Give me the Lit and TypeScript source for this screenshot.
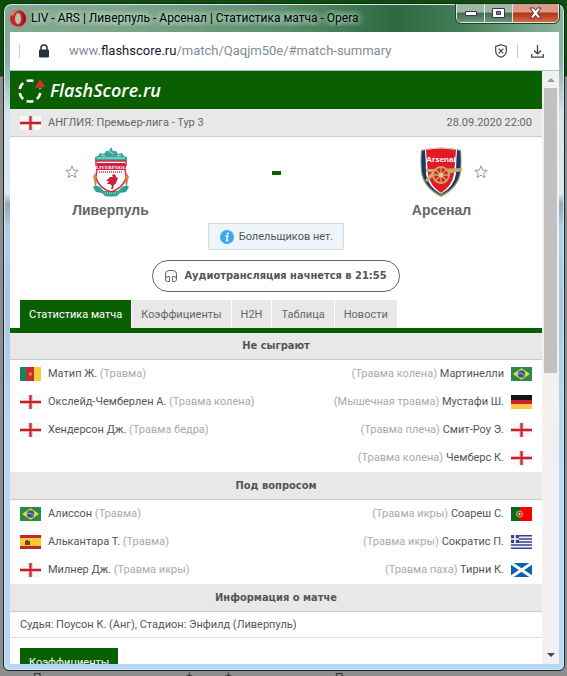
import { LitElement, html, css, svg, TemplateResult } from "lit";
import { customElement, property } from "lit/decorators.js";

type Player = { name: string; reason: string; flag: string };

const star = (cx: number, cy: number, r: number) => {
  const points: string[] = [];
  for (let i = 0; i < 10; i++) {
    const a = -Math.PI / 2 + (i * Math.PI) / 5;
    const d = i % 2 ? r * 0.42 : r;
    points.push(`${(cx + d * Math.cos(a)).toFixed(2)},${(cy + d * Math.sin(a)).toFixed(2)}`);
  }
  return points.join(" ");
};

const FLAGS: Record<string, TemplateResult> = {
  england: svg`<path fill="#f8f8f8" d="M0 0h21v14H0z"/><path stroke="#f0b4b8" stroke-width="4" d="M10.5 0v14M0 7h21"/><path stroke="#c4202e" stroke-width="2" d="M10.5 0v14M0 7h21"/>`,
  cameroon: svg`<path fill="#1c8062" d="M0 0h6v14H0z"/><path fill="#c52b32" d="M6 0h8v14H6z"/><path fill="#f6cf35" d="M14 0h7v14h-7z"/><polygon fill="#f0a030" points=${star(10.5, 7, 2.4)} />`,
  brazil: svg`<path fill="#2a8a4a" d="M0 0h21v14H0z"/><path fill="#e5d844" d="M10.5 1.3 19 7l-8.500 5.700L2 7z"/><circle cx="10.500" cy="7" r="3.700" fill="#3b5796"/><path d="M7.200 6.200q3.600-.6 6.400 2.200" fill="none" stroke="#b9c9d8" stroke-width=".8"/>`,
  germany: svg`<path fill="#171214" d="M0 0h21v5H0z"/><path fill="#c9222b" d="M0 5h21v4H0z"/><path fill="#f7cb45" d="M0 9h21v5H0z"/>`,
  spain: svg`<path fill="#c1272d" d="M0 0h21v14H0z"/><path fill="#fbc832" d="M0 3h21v8H0z"/><path fill="#5e4422" d="M5 6h1V5h2v1h2v4H5z"/><path fill="#933" d="M6 7h2v2H6z"/>`,
  portugal: svg`<path fill="#0b6a1d" d="M0 0h9v14H0z"/><path fill="#f00" d="M9 0h12v14H9z"/><circle cx="8.500" cy="7" r="3" fill="#b33a22" stroke="#d8b43c"/><circle cx="8.500" cy="7" r="1" fill="#eee"/>`,
  greece: svg`<path fill="#f2f3f8" d="M0 0h21v14H0z"/><path stroke="#3d4286" stroke-width="1.600" d="M0 .8h21M0 4h21M0 7h21M0 10h21M0 13.200h21"/><path fill="#3d4286" d="M0 0h8v8H0z"/><path stroke="#fff" stroke-width="1.500" d="M4 0v8M0 4h8"/>`,
  scotland: svg`<path fill="#0b62b4" d="M0 0h21v14H0z"/><path stroke="#fff" stroke-width="3" d="m0 0 21 14M21 0 0 14"/>`,
};

@customElement("country-flag")
class CountryFlag extends LitElement {
  static styles = css`
    :host { display: block; width: 21px; height: 14px; flex: none; }
    svg { display: block; }
  `;
  @property() code = "england";
  render() {
    return html`<svg width="21" height="14" viewBox="0 0 21 14" aria-hidden="true">${FLAGS[this.code]}</svg>`;
  }
}

@customElement("absence-list")
class AbsenceList extends LitElement {
  static styles = css`
    :host { display: block; }
    .columns { display: flex; justify-content: space-between; }
    ul { list-style: none; margin: 0; padding: 0 10px; }
    li { display: flex; align-items: center; gap: 7px; height: 28px; white-space: nowrap; }
    .away li { flex-direction: row-reverse; }
    .reason { color: #aaa; }
  `;
  @property({ attribute: false }) home: Player[] = [];
  @property({ attribute: false }) away: Player[] = [];
  render() {
    return html`<div class="columns">
      <ul class="home">
        ${this.home.map((p) => html`<li><country-flag code=${p.flag}></country-flag><span>${p.name} <span class="reason">(${p.reason})</span></span></li>`)}
      </ul>
      <ul class="away">
        ${this.away.map((p) => html`<li><country-flag code=${p.flag}></country-flag><span><span class="reason">(${p.reason})</span> ${p.name}</span></li>`)}
      </ul>
    </div>`;
  }
}

const OUT_HOME: Player[] = [
  { name: "Матип Ж.", reason: "Травма", flag: "cameroon" },
  { name: "Окслейд-Чемберлен А.", reason: "Травма колена", flag: "england" },
  { name: "Хендерсон Дж.", reason: "Травма бедра", flag: "england" },
];
const OUT_AWAY: Player[] = [
  { name: "Мартинелли", reason: "Травма колена", flag: "brazil" },
  { name: "Мустафи Ш.", reason: "Мышечная травма", flag: "germany" },
  { name: "Смит-Роу Э.", reason: "Травма плеча", flag: "england" },
  { name: "Чемберс К.", reason: "Травма колена", flag: "england" },
];
const DOUBT_HOME: Player[] = [
  { name: "Алиссон", reason: "Травма", flag: "brazil" },
  { name: "Алькантара Т.", reason: "Травма", flag: "spain" },
  { name: "Милнер Дж.", reason: "Травма икры", flag: "england" },
];
const DOUBT_AWAY: Player[] = [
  { name: "Соареш С.", reason: "Травма икры", flag: "portugal" },
  { name: "Сократис П.", reason: "Травма икры", flag: "greece" },
  { name: "Тирни К.", reason: "Травма паха", flag: "scotland" },
];
const TABS = ["Статистика матча", "Коэффициенты", "H2H", "Таблица", "Новости"];

const favourite = html`<svg width="14" height="14" viewBox="0 0 14 14" aria-hidden="true"><polygon points=${star(7, 7.4, 6.6)} fill="#fff" stroke="#999"/></svg>`;

const liverpoolCrest = html`<svg width="38" height="50" viewBox="0 0 38 50" aria-hidden="true">
  <path d="M3 14V10l3-1 2-3 4 1 2-3 3 0 2-4 2 4 3 0 2 3 4-1 2 3 3 1v4z" fill="#35a79b"/>
  <path d="M5 11h28M9 8l4 1M25 9l4-1M17 4l4 3" stroke="#bfe6df" stroke-width="1" fill="none"/>
  <path d="M1 40q4-3 8 1l3 3h14l3-3q4-4 8-1l-3 5-6 1-3 3q-6 1-12 0l-3-3-6-1z" fill="#2fa294"/>
  <path d="M4 14h30v4l-1 2 1 11q-3 10-15 14Q7 41 4 31l1-11-1-2z" fill="#fff" stroke="#d02846" stroke-width="1.500"/>
  <path d="M5 16h28v7H5z" fill="#cf2242"/>
  <text x="19" y="22" text-anchor="middle" font-family="Liberation Serif, serif" font-size="5" font-weight="bold" fill="#fff">LIVERPOOL</text>
  <path d="M7 25h24" stroke="#d02846" stroke-dasharray="1 1" stroke-width="1.500"/>
  <path d="m23 27-3 1 1 2-3 0-4 4 3 0-2 3 3 0 2 2-1 3 2 0 1-4 2-2 2-5-2-1z" fill="#cb1f40"/>
  <path d="m3 26-2 4 1 3h2l1-3zM35 26l-2 4 1 3h2l1-3z" fill="#e9843f"/>
  <path d="M2 33h3l-1 6H3zM33 33h3l-1 6h-1z" fill="#b98a4b"/>
  <path d="M13 46h12" stroke="#c9eae5" stroke-dasharray="1 1"/>
</svg>`;

const arsenalCrest = html`<svg width="44" height="50" viewBox="0 0 44 50" aria-hidden="true">
  <path d="M2 3Q22-2 42 3q1 10 0 22-2 16-20 25Q4 41 2 25 1 13 2 3z" fill="#a99561"/>
  <path d="M3 4Q22-1 41 4q1 10 0 20-2 16-19 24Q5 40 3 24 2 12 3 4z" fill="#173a6b"/>
  <path d="M6 3Q22-1 38 3q-1 12-1 24-2 13-15 20Q9 40 7 27 7 15 6 3z" fill="#fff"/>
  <path d="M7 3Q22 0 37 3q-1 13-2 24-2 12-13 19Q11 39 9 27 8 16 7 3z" fill="#e21a22"/>
  <text x="22" y="15" text-anchor="middle" font-family="Liberation Sans, sans-serif" font-size="8" font-weight="bold" fill="#fff">Arsenal</text>
  <path d="M7 22h12l24-1v3l-16 3-13 2-6 6-2-2 7-8H7z" fill="#c5ab6c"/>
  <circle cx="22" cy="28" r="8" fill="#e21a22" stroke="#c5ab6c" stroke-width="2"/>
  <path d="M22 20v16M14 28h16M16.500 22.500l11 11M27.500 22.500l-11 11" stroke="#c5ab6c" stroke-width="1.300"/>
  <circle cx="22" cy="28" r="2.500" fill="#d9c690"/>
</svg>`;

@customElement("app-root")
class AppRoot extends LitElement {
  static styles = css`
    * { box-sizing: border-box; }
    :host {
      box-sizing: border-box;
      display: flex; flex-direction: column; height: 100vh; padding: 3px 2px 0 3px; overflow: hidden;
      background: linear-gradient(#0d4d0c 0 76px, #8d8d8d 77px);
      font: 11px/14px Roboto, sans-serif; color: #555;
    }
    svg { display: block; flex: none; }
    button { font: inherit; color: inherit; border: 0; background: none; padding: 0; margin: 0; }
    .window {
      flex: 1; min-height: 0; display: flex; flex-direction: column;
      border: 1px solid #1b2426; border-radius: 8px 8px 6px 6px; padding: 0 5px 6px 6px; overflow: hidden;
      box-shadow: inset 0 0 0 1px #d5e8e6;
      background: linear-gradient(#0000 0 28px, #8fb2a9 60px, #d5e3ef 110px, #dce9f5 190px, #91a9b4 200px, #b0ceec 225px, #a9c5e3 300px, #b8d6f4 420px, #b8d7f8),
        linear-gradient(90deg, #84aa92, #79a386 25%, #5b8e6c 50%, #2c693e 70%, #457f58 82%, #8eb59c);
    }
    .titlebar { flex: none; height: 28px; display: flex; align-items: center; gap: 5px; color: #000; font: 12px/16px Roboto, sans-serif; }
    .title { flex: 1; min-width: 0; white-space: nowrap; overflow: hidden; text-shadow: 0 0 6px #dfe, 0 0 8px #dfe; }
    .controls { display: flex; align-self: flex-start; height: 19px; border: 1px solid #dbe8df; border-top: 0; border-radius: 0 0 5px 5px; overflow: hidden; outline: 1px solid #26402e; outline-offset: 0; }
    .controls button { width: 28px; display: grid; place-items: center; background: linear-gradient(#9db9a5 45%, #436b50 50%, #6c947a); border-right: 1px solid #dbe8df; }
    .controls .close { width: 45px; border: 0; background: linear-gradient(#d99a88 45%, #b2321a 50%, #d36a43); }
    .address { flex: none; height: 39px; display: flex; align-items: center; background: #fff; border-bottom: 1px solid #b9c2c8; padding: 0 15px 0 9px; }
    .rule { width: 1px; height: 14px; background: #ccc; }
    .lock { margin: 0 20px 0 19px; }
    .url { flex: 1; min-width: 0; white-space: nowrap; overflow: hidden; color: #808d99; text-decoration: none; font: 13px/20px Roboto, sans-serif; }
    .url b { font-weight: 400; color: #14202c; }
    .tools { display: flex; align-items: center; gap: 10px; }
    .download { margin-left: 3px; }
    .viewport { flex: 1; min-height: 0; display: flex; background: #fff; overflow: hidden; }
    .page { flex: 1; min-width: 0; overflow: hidden; }
    .scroll { flex: none; width: 17px; background: #f1f1f1; display: flex; flex-direction: column; align-items: center; padding: 7px 0; }
    .thumb { width: 13px; height: 285px; margin-top: 6px; background: #c1c1c1; }
    .down { margin-top: auto; }
    .brand { height: 38px; background: #0a5f00; display: flex; align-items: center; gap: 5px; padding-left: 7px; color: #fff; }
    .brand a { color: #fff; text-decoration: none; font: italic 600 18px/24px "Open Sans", sans-serif; }
    .league { height: 28px; background: #e8e8e8; border-bottom: 1px solid #ccc; display: flex; align-items: center; gap: 7px; padding: 0 10px; color: #666; }
    .league .date { margin-left: auto; }
    .match { display: grid; grid-template-columns: 201px 1fr 201px; padding: 9px 0 0; height: 86px; }
    .team { display: flex; flex-direction: column; align-items: center; gap: 3px; }
    .crest { display: flex; align-items: center; height: 52px; }
    .home-team .crest { padding-right: 26px; gap: 13px; }
    .away-team .crest { padding-left: 24px; gap: 11px; }
    .team h2 { margin: 0; font: bold 14px/18px "Liberation Sans", sans-serif; color: #666; }
    .score { justify-self: center; margin-top: 25px; width: 9px; height: 4px; background: #0a5f00; }
    .center { display: flex; flex-direction: column; align-items: center; gap: 10px; }
    .notice { height: 27px; display: flex; align-items: center; gap: 5px; padding: 0 10px 0 11px; border: 1px solid #cfdce2; background: #eef5fa; }
    .audio { height: 32px; display: flex; align-items: center; gap: 7px; padding: 0 12px; border: 1px solid #666; border-radius: 16px; font: bold 11px/14px "DejaVu Sans Condensed", sans-serif; }
    .tabs { display: flex; gap: 1px; padding: 0 10px; margin-top: 8px; border-bottom: 5px solid #0a5f00; }
    .tabs button { height: 28px; padding: 2px 9px 0; background: #e8e8e8; color: #666; white-space: nowrap; }
    .tabs .active { background: #0a5f00; color: #fff; }
    h3 { margin: 0; height: 27px; padding-top: 6px; background: #e8e8e8; border-bottom: 1px solid #ccc; text-align: center; font: bold 11px/14px "DejaVu Sans Condensed", sans-serif; color: #555; }
    absence-list + h3 { height: 28px; padding-top: 7px; }
    .info { margin: 0; height: 26px; padding: 6px 10px; border-bottom: 1px solid #ddd; white-space: nowrap; }
    .odds { display: block; height: 28px; margin: 10px 10px 0; padding: 2px 9px 0; background: #0a5f00; color: #fff; }
    .behind { flex: none; height: 5px; padding-left: 30px; display: grid; grid-template-columns: 152px 39px 111px auto; overflow: hidden; color: #333; font: 12px/14px Roboto, sans-serif; }
  `;

  render() {
    return html`<div class="window">
      <header class="titlebar">
        <svg width="16" height="17" viewBox="0 0 16 17" aria-hidden="true"><ellipse cx="8" cy="8.500" rx="8" ry="8.300" fill="#d0212b"/><path d="M8 .2a8 8.300 0 0 1 0 16.600q5-1 5-8.300T8 .2z" fill="#a80d18"/><path d="M1 5Q4 0 9 1 5 1 3 6z" fill="#f08080"/><ellipse cx="8" cy="8.500" rx="3" ry="5.500" fill="#a9c7b3"/></svg>
        <span class="title">LIV - ARS | Ливерпуль - Арсенал | Статистика матча - Opera</span>
        <div class="controls">
          <button aria-label="Свернуть"><svg width="12" height="5" viewBox="0 0 12 5"><path d="M.5.5h11v4H.5z" fill="#fff" stroke="#435"/></svg></button>
          <button aria-label="Развернуть"><svg width="13" height="10" viewBox="0 0 13 10"><path d="M.5.5h12v9H.5z" fill="#fff" stroke="#435"/><path d="M4.500 3.500h4v3h-4z" fill="#688" stroke="#435"/></svg></button>
          <button class="close" aria-label="Закрыть"><svg width="13" height="12" viewBox="0 0 13 12"><path d="M1 1h3.500l2 2.500L8.500 1H12L8.500 6l3.500 5H8.500l-2-2.500-2 2.500H1l3.500-5z" fill="#fff" stroke="#534"/></svg></button>
        </div>
      </header>
      <div class="address">
        <span class="rule"></span>
        <svg class="lock" width="10" height="14" viewBox="0 0 10 14" aria-hidden="true"><path d="M2 6V4a3 3 0 0 1 6 0v2" fill="none" stroke="#27313b" stroke-width="1.500"/><rect y="5.500" width="10" height="8" rx="1" fill="#27313b"/></svg>
        <a class="url" href="#match-summary">www.<b>flashscore.ru</b>/match/Qaqjm50e/#match-summary</a>
        <div class="tools">
          <button aria-label="Блокировка"><svg width="12" height="14" viewBox="0 0 12 14" fill="none" stroke="#3a444d" stroke-width="1.200"><path d="M6 .7 11.300 2.500v5Q11 11.500 6 13.300 1 11.500.7 7.500v-5zM3.700 4.700l4.600 4.600M8.300 4.700 3.700 9.300"/></svg></button>
          <span class="rule"></span>
          <button class="download" aria-label="Загрузки"><svg width="13" height="13" viewBox="0 0 13 13" fill="none" stroke="#3a444d" stroke-width="1.300"><path d="M6.500 0v8.500M3 5.500l3.500 3.300L10 5.500M.7 9v3.200h11.600V9"/></svg></button>
        </div>
      </div>
      <div class="viewport">
        <main class="page">
          <div class="brand">
            <svg width="28" height="26" viewBox="0 0 28 26" aria-hidden="true"><circle cx="13" cy="14" r="10.500" fill="none" stroke="#fff" stroke-width="2.600" stroke-dasharray="7 4" stroke-dashoffset="-2" pathLength="66"/><path d="M18 8V0h10v11l-9 1z" fill="#0a5f00"/><path d="m23 2 5 8-10 1z" fill="#d6322a"/></svg>
            <a href="#home">FlashScore.ru</a>
          </div>
          <div class="league"><country-flag code="england"></country-flag><span>АНГЛИЯ: Премьер-лига - Тур 3</span><span class="date">28.09.2020 22:00</span></div>
          <section class="match">
            <div class="team home-team"><div class="crest"><button aria-label="Добавить Ливерпуль">${favourite}</button>${liverpoolCrest}</div><h2>Ливерпуль</h2></div>
            <div class="score" role="img" aria-label="-"></div>
            <div class="team away-team"><div class="crest">${arsenalCrest}<button aria-label="Добавить Арсенал">${favourite}</button></div><h2>Арсенал</h2></div>
          </section>
          <div class="center">
            <div class="notice"><svg width="14" height="14" viewBox="0 0 14 14" aria-hidden="true"><circle cx="7" cy="7" r="7" fill="#3ea6ee"/><circle cx="7.800" cy="3.600" r="1.100" fill="#fff"/><path d="M5.500 6h2.200l-1 4.500h1.500" fill="none" stroke="#fff" stroke-width="1.400"/></svg><span>Болельщиков нет.</span></div>
            <button class="audio"><svg width="12" height="12" viewBox="0 0 12 12" fill="none" stroke="#666"><path d="M.5 9V4Q.5.5 4 .5h4q3.500 0 3.500 3.500v5M3 6.500h1.500v5H2.500q-2 0-2-2.500t2.500-2.500zM9 6.500H7.500v5h2q2 0 2-2.500T9 6.500z"/></svg><span>Аудиотрансляция начнется в 21:55</span></button>
          </div>
          <nav class="tabs">${TABS.map((t, i) => html`<button class=${i === 0 ? "active" : ""}>${t}</button>`)}</nav>
          <h3>Не сыграют</h3>
          <absence-list .home=${OUT_HOME} .away=${OUT_AWAY}></absence-list>
          <h3>Под вопросом</h3>
          <absence-list .home=${DOUBT_HOME} .away=${DOUBT_AWAY}></absence-list>
          <h3>Информация о матче</h3>
          <p class="info">Судья: Поусон К. (Анг), Стадион: Энфилд (Ливерпуль)</p>
          <button class="odds">Коэффициенты</button>
        </main>
        <div class="scroll" aria-hidden="true">
          <svg width="8" height="4" viewBox="0 0 8 4"><path d="m4 0 4 4H0z" fill="#999"/></svg>
          <div class="thumb"></div>
          <svg class="down" width="8" height="4" viewBox="0 0 8 4"><path d="m4 4 4-4H0z" fill="#444"/></svg>
        </div>
      </div>
    </div>
    <div class="behind" aria-hidden="true"><span>П</span><span>ф</span><span>ф</span><span>П</span></div>`;
  }
}
